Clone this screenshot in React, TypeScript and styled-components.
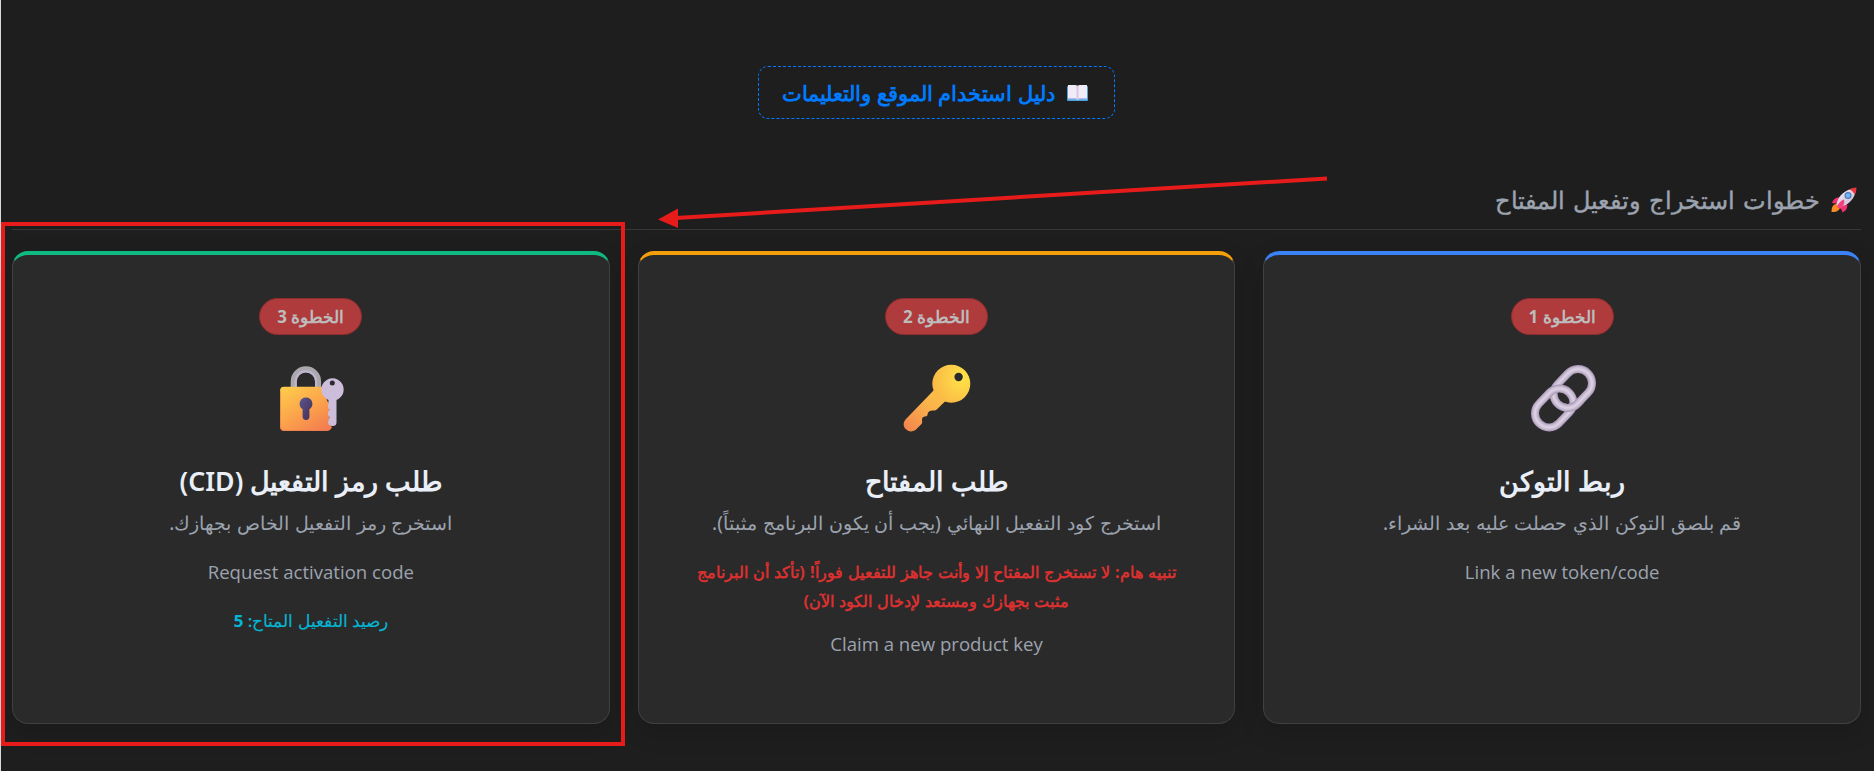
import {ReactNode} from "react";
import styled, {createGlobalStyle} from "styled-components";

const GlobalStyle = createGlobalStyle`
  * {
    box-sizing: border-box;
  }

  body {
    margin: 0;
    background: #1e1e1e;
    overflow: hidden;
  }
`

const Page = styled.div`
  position: relative;
  display: flex;
  flex-direction: column;
  align-items: center;
  height: 771px;
  padding: 66px 13px 0 11px;
  border-left: 1px solid #d9d9d9;
  background: #1e1e1e;
  color: #9ca3af;
  font-family: "Noto Sans";
`

const GuideButton = styled.a`
  display: flex;
  align-items: center;
  gap: 12px;
  height: 53px;
  padding: 0 26px 0 23px;
  border: 1px dashed #007bff;
  border-radius: 10px;
  color: #007bff;
  font-size: 20.8px;
  font-weight: 600;
  line-height: 28px;
  white-space: nowrap;
  word-spacing: 0.5px;
`

const SectionTitle = styled.h2`
  display: flex;
  align-items: center;
  gap: 11px;
  width: 100%;
  height: 60px;
  margin: 51px 0 21px;
  padding: 0 4px 0 0;
  border-bottom: 1px solid #373737;
  font-size: 24px;
  font-weight: 500;
  line-height: 40px;
  word-spacing: 1.7px;
  -webkit-text-stroke: 0.4px #9ca3af;
`

const Cards = styled.div`
  display: grid;
  grid-template-columns: repeat(3, 1fr);
  gap: 28px;
  width: 100%;
  height: 473px;
`

const Card = styled.div<{ $accent: string }>`
  display: flex;
  flex-direction: column;
  align-items: center;
  padding-top: 43px;
  border: 1px solid #404040;
  border-top: 4px solid ${({$accent}) => $accent};
  border-radius: 16px;
  background: #2a2a2a;
  box-shadow: 0 8px 24px rgba(0, 0, 0, 0.15);
  text-align: center;
  white-space: nowrap;
`

const Badge = styled.span`
  width: 103px;
  height: 37px;
  border: 1px solid #8f2c2d;
  border-radius: 19px;
  background: #b03b3c;
  color: #bcbcbc;
  font-size: 17px;
  font-weight: 700;
  line-height: 36px;
`

const CardIcon = styled.div`
  height: 80px;
  margin: 23px 0 21px;
`

const CardTitle = styled.h3`
  margin: 0;
  color: #e9eef7;
  font-size: 26.7px;
  font-weight: 600;
  line-height: 44px;
`

const Description = styled.p`
  margin: 0 0 14px;
  font-size: 19.15px;
  line-height: 40px;
  word-spacing: 0.8px;
`

const Warning = styled.p`
  margin: 0 0 14px;
  color: #d93030;
  font-size: 16.4px;
  font-weight: 700;
  line-height: 29px;
  word-spacing: 0.8px;
`

const English = styled.p`
  margin: 0;
  font-family: "Open Sans", sans-serif;
  font-size: 18.6px;
  line-height: 30px;
`

const Credit = styled.p`
  margin: 19px 0 0;
  color: #06b6d4;
  font-size: 16.8px;
  font-weight: 500;
  line-height: 30px;
  -webkit-text-stroke: 0.15px #06b6d4;
`

// annotations drawn over the page
const Highlight = styled.div`
  position: absolute;
  top: 222px;
  left: 0;
  width: 624px;
  height: 524px;
  border: 4px solid #e81b1b;
`

const Arrow = styled.svg`
  position: absolute;
  top: 165px;
  left: 639px;
`

const BookIcon = () => (
    <svg width="21" height="16" viewBox="0 0 21 16">
        <rect y="1" width="21" height="15" rx="1" fill="#4aa3df"/>
        <path d="M1 12h19v2.5h-8l-1.5 1-1.5-1H1z" fill="#a9bce8"/>
        <path d="M1 0h7.5l2 1 2-1H20v13h-7.500l-2 1-2-1H1z" fill="#f1ebf8"/>
        <path d="M9.500 0.500h2v13h-2z" fill="#d4c8e3"/>
    </svg>
)

const RocketIcon = () => (
    <svg width="26" height="26" viewBox="0 0 26 26">
        <defs>
            <linearGradient id="rocketBody" x1="0" y1="0" x2="1" y2="1">
                <stop offset="0" stopColor="#f5eef8"/>
                <stop offset="1" stopColor="#c5b6cf"/>
            </linearGradient>
        </defs>
        <path d="M6 17C2 17 .5 20 .5 25c4 .5 8-1 8.500-5z" fill="#fb8b24"/>
        <path d="M9 10.500C5 10 2 12 1 16l6 1zM16 17c1 4-1 7-4.500 8.500L9 19z" fill="#f0306f"/>
        <path d="M5.500 17.500C7 9 13 2.500 25 1c-.5 11-8 17.500-16.500 19z" fill="url(#rocketBody)"/>
        <path d="M18.500 2.300Q22 .8 25.500.5 25.500 4 24 7.500 22 4 18.500 2.300z" fill="#ee3440"/>
        <circle cx="17" cy="8.500" r="3.500" fill="#5277b8"/>
        <circle cx="17" cy="8.500" r="2.300" fill="#6fb8f5"/>
        <path d="M13 12.500c-3 1-6 4-7 7.500l3 2c3-2 5-5 4-9.500z" fill="#f6417f"/>
    </svg>
)

const LinkIcon = () => {
    const rings = (x: number, y: number) => (
        <g transform={`rotate(-46 ${x} ${y})`} fill="none">
            <rect x={x - 21.5} y={y - 14} width="43" height="28" rx="14" stroke="#a797b6" strokeWidth="8"/>
            <rect x={x - 21.5} y={y - 14} width="43" height="28" rx="14" stroke="#c0b2cb" strokeWidth="6.400"/>
            <rect x={x - 21.5} y={y - 14} width="43" height="28" rx="14" stroke="#cdc1d6" strokeWidth="4.200"/>
            <rect x={x - 21.5} y={y - 14} width="43" height="28" rx="14" stroke="#dbd1e2" strokeWidth="1.800"/>
        </g>
    )
    return (
        <svg width="80" height="80" viewBox="0 0 80 80">
            <clipPath id="linkOverlap"><rect x="42" y="41" width="20" height="20"/></clipPath>
            {rings(50.8, 30.5)}
            {rings(32.2, 50)}
            <g clipPath="url(#linkOverlap)">{rings(50.8, 30.5)}</g>
        </svg>
    )
}

const KeyIcon = () => (
    <svg width="80" height="80" viewBox="0.500 0 80 80">
        <defs>
            <linearGradient id="keyShaft" x1="1" y1="0" x2="0.15" y2="1">
                <stop offset="0" stopColor="#fdc548"/>
                <stop offset="0.450" stopColor="#fab14b"/>
                <stop offset="1" stopColor="#f3874d"/>
            </linearGradient>
            <radialGradient id="keyHead" cx="0.8" cy="0.350" r="0.8">
                <stop offset="0" stopColor="#ffe348"/>
                <stop offset="1" stopColor="#fbb946"/>
            </radialGradient>
        </defs>
        <path
            d="M38 31.500 9 61.500Q5.500 66 8.500 70.500 13.500 75.500 19 72L25.300 65.800Q26 64.500 25.500 61 26 58.500 30 58.300 31.500 57.500 31.300 55 32.500 52 36.500 52.500 39 53 40.500 51.200L49.500 42.500z"
            fill="url(#keyShaft)"/>
        <path
            d="M54.800 6.700a19 19 0 1 0 0 38 19 19 0 1 0 0-38zM62.100 14.800a4.200 4.200 0 1 1 0 8.400 4.200 4.200 0 1 1 0-8.400z"
            fill="url(#keyHead)" fillRule="evenodd"/>
    </svg>
)

const LockIcon = () => (
    <svg width="80" height="80" viewBox="0 0 80 80">
        <defs>
            <linearGradient id="lockBody" x1="0.100" y1="0" x2="0.8" y2="1">
                <stop offset="0" stopColor="#ffcb4c"/>
                <stop offset="0.500" stopColor="#fba64b"/>
                <stop offset="1" stopColor="#f47d50"/>
            </linearGradient>
            <linearGradient id="lockHole" x1="0" y1="0" x2="1" y2="1">
                <stop offset="0" stopColor="#5b568f"/>
                <stop offset="1" stopColor="#432c55"/>
            </linearGradient>
        </defs>
        <path d="M22.700 31V23.500a12.200 12.200 0 0 1 24.400 0V31" fill="none" stroke="#aaa8ad" strokeWidth="6"/>
        <path d="M24.700 31V23.500a10.200 10.200 0 0 1 20.400 0V31" fill="none" stroke="#c1b4ce" strokeWidth="2.200"/>
        <path d="M13 28.700H53Q54 40 58 46V64Q59 67 61 69.500 59 73 55.500 73H13.500Q9 73 9 68.500V33Q9 28.700 13 28.700z"
              fill="url(#lockBody)"/>
        <path d="M9.500 33V68.500Q9.500 72.500 13.500 72.500H55" fill="none" stroke="#e8774d" strokeOpacity="0.600"/>
        <path d="M35 39.400a6.400 6.400 0 0 1 3.400 11.800V58.500a3.400 3.400 0 0 1-6.800 0V51.200A6.400 6.400 0 0 1 35 39.400z"
              fill="url(#lockHole)"/>
        <path
            d="M57.500 42a11.200 11.200 0 1 1 8 0V64.500Q65.500 68 61.500 68 57.500 68 57 64.500L58.500 59 57 57V54L58.500 52 57 49.500zM61.300 22.500a2.500 2.500 0 1 0 0 5 2.500 2.500 0 1 0 0-5z"
            fill="#ccbddb" fillRule="evenodd"/>
    </svg>
)

interface IStep {
    label: string;
    accent: string;
    icon: ReactNode;
    title: string;
    description: string;
    warning?: string[];
    english: string;
    credit?: number;
}

const steps: IStep[] = [
    {
        label: 'الخطوة 1',
        accent: '#3b82f6',
        icon: <LinkIcon/>,
        title: 'ربط التوكن',
        description: 'قم بلصق التوكن الذي حصلت عليه بعد الشراء.',
        english: 'Link a new token/code',
    },
    {
        label: 'الخطوة 2',
        accent: '#f59e0b',
        icon: <KeyIcon/>,
        title: 'طلب المفتاح',
        description: 'استخرج كود التفعيل النهائي (يجب أن يكون البرنامج مثبتاً).',
        warning: [
            'تنبيه هام: لا تستخرج المفتاح إلا وأنت جاهز للتفعيل فوراً! (تأكد أن البرنامج',
            'مثبت بجهازك ومستعد لإدخال الكود الآن)',
        ],
        english: 'Claim a new product key',
    },
    {
        label: 'الخطوة 3',
        accent: '#10b981',
        icon: <LockIcon/>,
        title: 'طلب رمز التفعيل (CID)',
        description: 'استخرج رمز التفعيل الخاص بجهازك.',
        english: 'Request activation code',
        credit: 5,
    },
]

function App() {
    return (
        <Page dir="rtl">
            <GlobalStyle/>
            <GuideButton>
                <BookIcon/>
                <span>دليل استخدام الموقع والتعليمات</span>
            </GuideButton>
            <SectionTitle>
                <RocketIcon/>
                <span>خطوات استخراج وتفعيل المفتاح</span>
            </SectionTitle>
            <Cards>
                {steps.map((step) => (
                    <Card key={step.label} $accent={step.accent}>
                        <Badge>{step.label}</Badge>
                        <CardIcon>{step.icon}</CardIcon>
                        <CardTitle>{step.title}</CardTitle>
                        <Description>{step.description}</Description>
                        {step.warning && (
                            <Warning>
                                {step.warning[0]}
                                <br/>
                                {step.warning[1]}
                            </Warning>
                        )}
                        <English dir="ltr">{step.english}</English>
                        {step.credit && <Credit>رصيد التفعيل المتاح: <b>{step.credit}</b></Credit>}
                    </Card>
                ))}
            </Cards>
            <Highlight/>
            <Arrow width="700" height="70" viewBox="0 0 700 70">
                <path d="M687 13.500 36 53" stroke="#e81b1b" strokeWidth="4" fill="none"/>
                <path d="M18 54.500 38 43.500V63z" fill="#e81b1b"/>
            </Arrow>
        </Page>
    );
}

export default App;
